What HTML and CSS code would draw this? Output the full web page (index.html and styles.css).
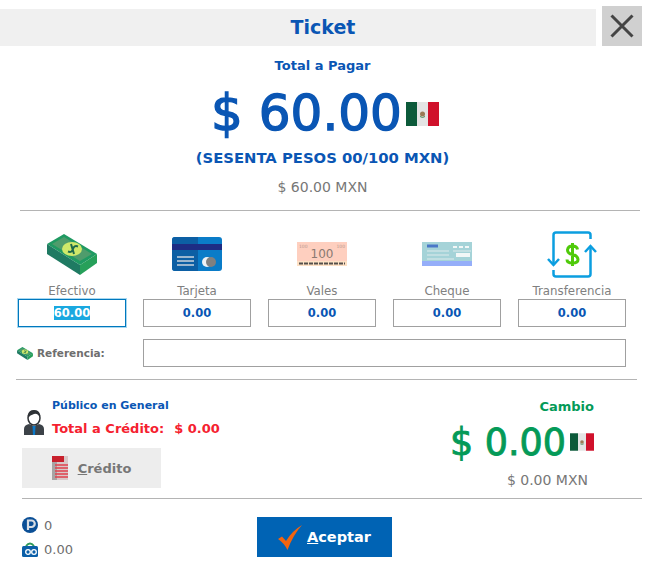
FILE: index.html
```html
<!DOCTYPE html>
<html lang="es">
<head>
<meta charset="utf-8">
<title>Ticket</title>
<link rel="stylesheet" href="styles.css">
</head>
<body>
<svg class="defs" width="0" height="0" aria-hidden="true">
  <defs>
    <symbol id="flag" viewBox="0 0 33 24">
      <rect width="11" height="24" fill="#0c5a3a"/>
      <rect x="11" width="11" height="24" fill="#e4e4e4"/>
      <rect x="22" width="11" height="24" fill="#d0112b"/>
      <circle cx="16.500" cy="12" r="2.500" fill="#9a7a55"/>
      <path d="M14 14.500q2.500 2 5 0" stroke="#4b8a5a" fill="none"/>
    </symbol>
    <symbol id="cash" viewBox="0 0 50 41">
      <path d="M0 10 17 0 50 20 33 31Z" fill="#1f9a62"/>
      <path d="M0 10V20L33 41V31Z" fill="#1f7a62"/>
      <path d="M33 31V41L50 29V20Z" fill="#27a05a"/>
      <path d="M5 10 17 3 45 20 33 27Z" fill="#4f9c6c"/>
      <ellipse cx="25" cy="15" rx="10" ry="7" fill="#cfe86a"/>
      <path d="M21 17.500Q25 19 26 15T31 12.500M24 10 27 20" stroke="#1d6a4c" stroke-width="2" fill="none"/>
    </symbol>
  </defs>
</svg>
<main class="page">
  <header class="top">
    <h1 class="title">Ticket</h1>
    <button class="close" type="button" aria-label="Cerrar">
      <svg width="24" height="24" viewBox="0 0 24 24"><path d="M1.500 1.500 22.500 22.500M22.500 1.500 1.500 22.500" stroke="#444" stroke-width="3" fill="none"/></svg>
    </button>
  </header>

  <section class="total">
    <div class="total-label">Total a Pagar</div>
    <div class="amount">
      <span>$ 60.00</span>
      <svg class="flag-big"><use href="#flag"/></svg>
    </div>
    <div class="words">(SESENTA PESOS 00/100 MXN)</div>
    <div class="sub">$ 60.00 MXN</div>
  </section>

  <hr class="rule rule-a">

  <section class="methods">
    <div class="method">
      <div class="icon-box"><svg class="cash-big"><use href="#cash"/></svg></div>
      <label class="method-label">Efectivo</label>
      <div class="field active"><span class="selected">60.00</span></div>
    </div>
    <div class="method">
      <div class="icon-box">
        <svg width="50" height="34" viewBox="0 0 50 34">
          <rect width="50" height="34" rx="3" fill="#0a7cc8"/>
          <path d="M3 0H26V34H3Q0 34 0 31V3Q0 0 3 0Z" fill="#0c5fa4"/>
          <rect y="7" width="50" height="6" fill="#1d2c84"/>
          <path d="M5 20H22M5 24H22M5 28H22" stroke="#c9d3dc" stroke-width="1.500"/>
          <circle cx="35" cy="25" r="5" fill="#eef2f5"/>
          <circle cx="39" cy="25" r="5" fill="#808080"/>
        </svg>
      </div>
      <label class="method-label">Tarjeta</label>
      <div class="field">0.00</div>
    </div>
    <div class="method">
      <div class="icon-box">
        <svg width="50" height="24" viewBox="0 0 50 24">
          <rect width="50" height="24" fill="#fecfbf"/>
          <rect y="19" width="50" height="5" fill="#fde0c4"/>
          <path d="M2 21.500H48" stroke="#55504c" stroke-width="2" stroke-dasharray="4 1"/>
          <text class="bill-big" x="25" y="16" text-anchor="middle">100</text>
          <text class="bill-small" x="2" y="5.500">100</text>
          <text class="bill-small" x="48" y="5.500" text-anchor="end">100</text>
        </svg>
      </div>
      <label class="method-label">Vales</label>
      <div class="field">0.00</div>
    </div>
    <div class="method">
      <div class="icon-box">
        <svg width="50" height="24" viewBox="0 0 50 24">
          <rect width="50" height="24" fill="#a5d3d8"/>
          <rect y="19" width="50" height="5" fill="#95aef9"/>
          <path d="M5 4H16" stroke="#4a78c8" stroke-width="3"/>
          <path d="M31 5H49" stroke="#f2f7f7" stroke-width="2" stroke-dasharray="4 2"/>
          <path d="M5 9H27M31 9H49M5 13H27M5 17H32" stroke="#dfeceb" stroke-width="1.200"/>
          <rect x="34" y="11" width="14" height="4" fill="#f2f7f7"/>
        </svg>
      </div>
      <label class="method-label">Cheque</label>
      <div class="field">0.00</div>
    </div>
    <div class="method">
      <div class="icon-box">
        <svg width="50" height="47" viewBox="0 0 50 47">
          <path d="M6.500 33V4Q6.500 1.500 9 1.500H41Q43.500 1.500 43.500 4V8M43.500 15V43Q43.500 45.500 41 45.500H9Q6.500 45.500 6.500 43V39" fill="none" stroke="#0b9ee0" stroke-width="2.500"/>
          <path d="M1 28 6.500 34 12 28M38 21 43.500 15 49 21" fill="none" stroke="#0b9ee0" stroke-width="2.500"/>
          <path d="M30.500 18.500Q30 15 25.500 15T20.500 19Q20.500 22.500 25.500 23.500T31 28.500Q31 32 25.500 32T20 28.500M25.500 12V35" fill="none" stroke="#4fca0a" stroke-width="3"/>
        </svg>
      </div>
      <label class="method-label">Transferencia</label>
      <div class="field">0.00</div>
    </div>
  </section>

  <section class="reference">
    <div class="ref-label">
      <svg class="cash-small"><use href="#cash"/></svg>
      <span>Referencia:</span>
    </div>
    <div class="field ref-field"></div>
  </section>

  <hr class="rule rule-b">

  <section class="summary">
    <div class="client">
      <div class="client-row">
        <svg class="person" width="20" height="25" viewBox="0 0 20 25">
          <path d="M0 25V19Q0 15 5 14L10 16 15 14Q20 15 20 19V25Z" fill="#3c4248"/>
          <path d="M8.500 16H11.500L11 25H9Z" fill="#0b78c8"/>
          <ellipse cx="10" cy="8" rx="6" ry="7" fill="#fff" stroke="#2e3236" stroke-width="1.500"/>
          <path d="M4 8Q3 0 10 0T16 8Q14 3 10 4T4 8Z" fill="#2e3236"/>
        </svg>
        <div class="client-text">
          <div class="client-name">Público en General</div>
          <div class="credit-total"><span>Total a Crédito:</span><span>$ 0.00</span></div>
        </div>
      </div>
      <button class="credit-btn" type="button">
        <svg width="18" height="24" viewBox="0 0 18 24">
          <rect width="16" height="24" fill="#d8c8c8"/>
          <rect width="5" height="24" fill="#a8a4a4"/>
          <rect width="12" height="6" fill="#c8202c"/>
          <path d="M3 9H16M3 12H16M3 15H16M3 18H16M3 21H16" stroke="#e0404c" stroke-width="1.500"/>
        </svg>
        <span><u>C</u>rédito</span>
      </button>
    </div>
    <div class="change">
      <div class="change-label">Cambio</div>
      <div class="change-amount">
        <span>$ 0.00</span>
        <svg class="flag-small"><use href="#flag"/></svg>
      </div>
      <div class="change-sub">$ 0.00 MXN</div>
    </div>
  </section>

  <hr class="rule rule-c">

  <footer class="bottom">
    <div class="balances">
      <div class="balance">
        <svg width="16" height="16" viewBox="0 0 16 16">
          <circle cx="8" cy="8" r="8" fill="#0b4f96"/>
          <path d="M6 13V3.500H9.500a3 3 0 0 1 0 6.500H6" fill="none" stroke="#d8dde4" stroke-width="2.200"/>
        </svg>
        <span>0</span>
      </div>
      <div class="balance">
        <svg width="16" height="16" viewBox="0 0 16 16">
          <path d="M4 5Q8 0 12 5" fill="none" stroke="#2f9a5a" stroke-width="2"/>
          <rect y="5" width="16" height="11" rx="1.500" fill="#0b5fa8"/>
          <circle cx="6" cy="11" r="2.300" fill="none" stroke="#fff" stroke-width="1.300"/>
          <circle cx="12" cy="11" r="2.300" fill="none" stroke="#fff" stroke-width="1.300"/>
        </svg>
        <span>0.00</span>
      </div>
    </div>
    <button class="accept" type="button">
      <svg width="24" height="25" viewBox="0 0 24 25">
        <path d="M0 14 4 11.500 8 16Q14 6 24 0 15 10 9.500 25 6 18 0 14Z" fill="#f2640f"/>
      </svg>
      <span><u>A</u>ceptar</span>
    </button>
  </footer>
</main>
</body>
</html>
```

FILE: styles.css
```css
* {
  box-sizing: border-box;
}

html,
body {
  margin: 0;
  padding: 0;
  background: #fff;
}

body {
  width: 645px;
  height: 565px;
  overflow: hidden;
  font-family: "DejaVu Sans", sans-serif;
}

.defs {
  position: absolute;
}

.page {
  display: flex;
  flex-direction: column;
  padding-top: 6px;
}

.top {
  display: flex;
  align-items: flex-end;
  gap: 6px;
  padding-right: 3px;
}

.title {
  flex: 1;
  margin: 0;
  height: 37px;
  padding-left: 50px;
  background: #f0f0f0;
  color: #0a56b4;
  font-size: 19px;
  font-weight: 700;
  line-height: 37px;
  text-align: center;
}

.close {
  display: flex;
  align-items: center;
  justify-content: center;
  width: 40px;
  height: 40px;
  padding: 0;
  border: 0;
  background: #d0d0d0;
}

.total {
  display: flex;
  flex-direction: column;
  align-items: center;
}

.total-label {
  margin-top: 12px;
  color: #0a56b4;
  font-size: 13px;
  font-weight: 700;
  line-height: 16px;
}

.amount {
  display: flex;
  align-items: flex-end;
  gap: 4px;
  margin-top: 10px;
  margin-left: 5px;
  height: 58px;
  color: #0a56b4;
  font-size: 50px;
  line-height: 58px;
  -webkit-text-stroke: 1.4px #0a56b4;
}

.flag-big {
  width: 33px;
  height: 24px;
  margin-bottom: 16px;
}

.words {
  margin-top: 7px;
  color: #0a56b4;
  font-size: 14.800px;
  font-weight: 700;
  line-height: 18px;
}

.sub {
  margin-top: 12px;
  color: #777;
  font-size: 14px;
  line-height: 16px;
}

.rule {
  height: 1px;
  margin: 0;
  border: 0;
  background: #b4b4b4;
}

.rule-a {
  margin: 15px 5px 0 20px;
}

.rule-b {
  margin: 12px 8px 0 16px;
}

.rule-c {
  margin: 10px 3px 0 22px;
}

.methods {
  display: grid;
  grid-template-columns: repeat(5, 108px);
  gap: 17px;
  margin-top: 18px;
  padding-left: 18px;
}

.method {
  display: flex;
  flex-direction: column;
  align-items: center;
}

.icon-box {
  display: flex;
  align-items: center;
  justify-content: center;
  height: 50px;
}

.cash-big {
  width: 50px;
  height: 41px;
}

.bill-big {
  fill: #8a7a72;
  font-family: "DejaVu Sans", sans-serif;
  font-size: 12px;
}

.bill-small {
  fill: #b89a90;
  font-family: "DejaVu Sans", sans-serif;
  font-size: 4.500px;
}

.method-label {
  margin-top: 5px;
  color: #808080;
  font-size: 11.800px;
  line-height: 15px;
}

.field {
  width: 108px;
  height: 28px;
  border: 1px solid #a0a0a0;
  background: #fff;
  color: #0a56b4;
  font-size: 11.500px;
  font-weight: 700;
  line-height: 26px;
  text-align: center;
}

.field.active {
  border: 1px solid #0078be;
  outline: 1px solid #a8d8f0;
}

.selected {
  background: #1aa8e0;
  color: #fff;
}

.reference {
  display: flex;
  align-items: center;
  margin-top: 12px;
  padding-left: 17px;
}

.ref-label {
  display: flex;
  align-items: center;
  gap: 4px;
  width: 126px;
  color: #6e6e6e;
  font-size: 10.500px;
  font-weight: 700;
}

.cash-small {
  width: 16px;
  height: 13px;
}

.ref-field {
  width: 483px;
}

.summary {
  display: flex;
  justify-content: space-between;
  padding: 17px 51px 0 22px;
}

.client {
  display: flex;
  flex-direction: column;
}

.client-row {
  display: flex;
  align-items: flex-end;
  gap: 8px;
  padding-left: 2px;
}

.person {
  margin-bottom: 3px;
}

.client-name {
  color: #0a56b4;
  font-size: 11px;
  font-weight: 700;
  line-height: 18px;
}

.client-text {
  display: flex;
  flex-direction: column;
  gap: 5px;
}

.credit-total {
  display: flex;
  gap: 10px;
  color: #f5212f;
  font-size: 13px;
  font-weight: 700;
  line-height: 18px;
}

.credit-btn {
  display: flex;
  align-items: center;
  justify-content: center;
  gap: 8px;
  width: 139px;
  height: 40px;
  margin-top: 10px;
  padding: 0;
  border: 0;
  background: #ededed;
  color: #777;
  font-family: inherit;
  font-size: 13px;
  font-weight: 700;
}

.change {
  display: flex;
  flex-direction: column;
  align-items: flex-end;
}

.change-label {
  margin-top: 2px;
  color: #049a58;
  font-size: 13px;
  font-weight: 700;
  line-height: 16px;
}

.change-amount {
  display: flex;
  align-items: flex-end;
  gap: 4px;
  height: 44px;
  margin-top: 6px;
  color: #049a58;
  font-size: 36.500px;
  line-height: 44px;
  -webkit-text-stroke: 0.9px #049a58;
}

.flag-small {
  width: 24px;
  height: 18px;
  margin-bottom: 14px;
}

.change-sub {
  margin-top: 8px;
  margin-right: 6px;
  color: #777;
  font-size: 14px;
  line-height: 15px;
}

.bottom {
  display: flex;
  padding: 18px 0 0 22px;
}

.balances {
  display: flex;
  flex-direction: column;
  gap: 8px;
  width: 235px;
}

.balance {
  display: flex;
  align-items: center;
  gap: 6px;
  height: 16px;
  color: #6e6e6e;
  font-size: 13px;
}

.accept {
  display: flex;
  align-items: center;
  justify-content: center;
  gap: 5px;
  width: 135px;
  height: 40px;
  padding: 0;
  border: 0;
  background: #0063b4;
  color: #fff;
  font-family: inherit;
  font-size: 14.500px;
  font-weight: 700;
}
```
